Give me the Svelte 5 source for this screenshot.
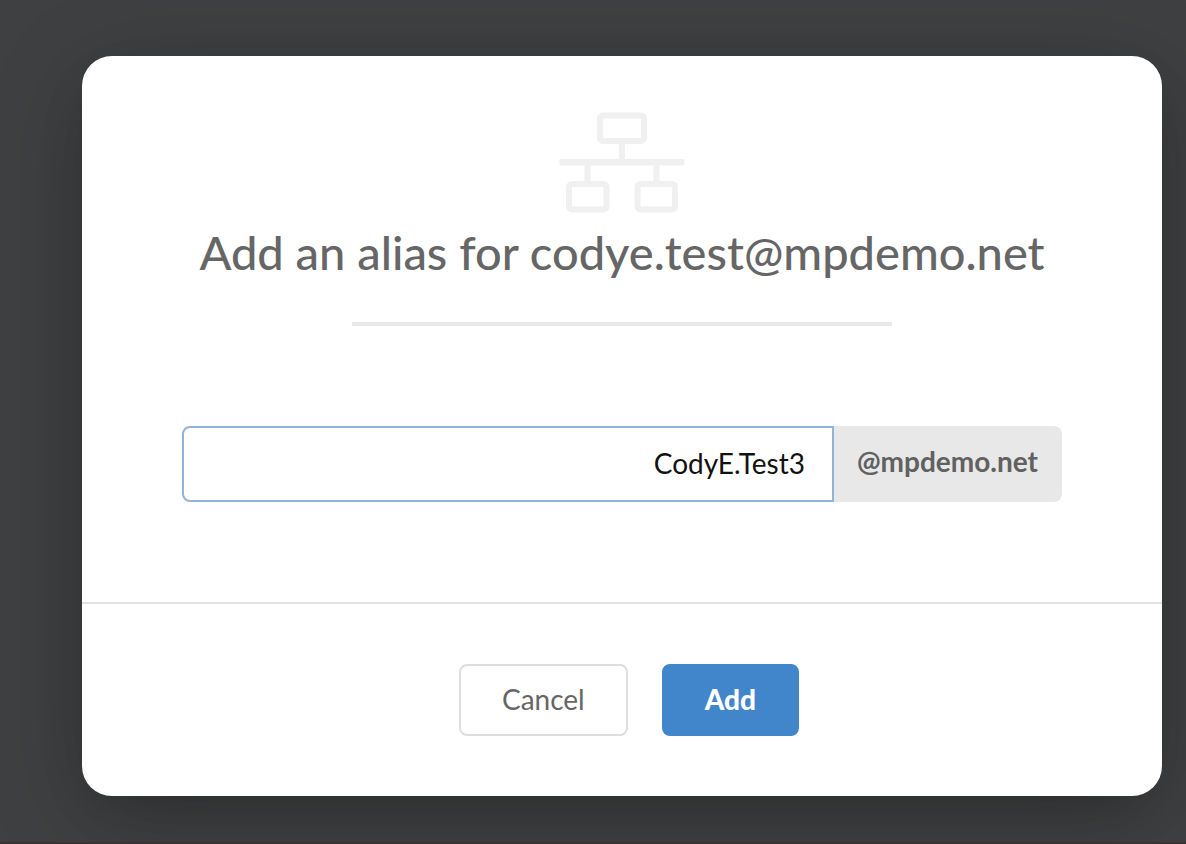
<script lang="ts">
  let address = 'codye.test@mpdemo.net';
  let domain = '@mpdemo.net';
  let alias = 'CodyE.Test3';
</script>

<div class="backdrop">
  <div class="modal" role="dialog" aria-labelledby="alias-title">
    <form on:submit|preventDefault>
      <div class="content">
        <svg class="icon" viewBox="0 0 126 102" fill="none" stroke="currentColor" stroke-width="6" aria-hidden="true">
          <rect x="41" y="3.5" width="44" height="25.5" rx="3" />
          <rect x="10" y="72" width="37.5" height="25.5" rx="3" />
          <rect x="78.5" y="72" width="37.5" height="25.5" rx="3" />
          <path d="M63 30V50M28.5 50V72M97.5 50V72" />
          <rect x="0.5" y="47" width="125" height="6.5" rx="1.5" fill="currentColor" stroke="none" />
        </svg>

        <h1 id="alias-title">Add an alias for {address}</h1>
        <hr />

        <div class="field">
          <input id="alias" type="text" aria-label="Alias" autocomplete="off" spellcheck="false" bind:value={alias} />
          <label for="alias">{domain}</label>
        </div>
      </div>

      <div class="actions">
        <button type="button" class="cancel">Cancel</button>
        <button type="submit" class="add">Add</button>
      </div>
    </form>
  </div>
</div>

<style>
  :global(body) {
    margin: 0;
    font-family: Lato, 'Open Sans', sans-serif;
    background-color: #3e3f40;
  }

  .backdrop {
    box-sizing: border-box;
    min-height: 100vh;
    padding: 56px 24px 46px 82px;
    border-bottom: 2px solid #3b3236;
    background-color: #3f4041;
    overflow: hidden;
  }

  .modal {
    border-radius: 30px;
    background-color: #ffffff;
    box-shadow: 0 20px 100px rgba(0, 0, 0, 0.2), 0 20px 60px -20px rgba(0, 0, 0, 0.2);
  }

  .content {
    display: flex;
    flex-direction: column;
    align-items: center;
    padding: 56px 100px 100px;
  }

  .icon {
    width: 126px;
    height: 102px;
    color: #f0f0f0;
  }

  h1 {
    margin: 8px 0 40px;
    color: #666666;
    font-size: 47px;
    font-weight: 500;
    line-height: 60px;
    text-align: center;
  }

  hr {
    width: 540px;
    max-width: 100%;
    height: 4px;
    margin: 0 0 100px;
    border: none;
    background-color: #e9e9e9;
  }

  .field {
    display: flex;
    width: 100%;
  }

  input {
    box-sizing: border-box;
    flex: 1;
    min-width: 0;
    height: 76px;
    padding: 0 27px 2px;
    border: 2px solid #8fb5d6;
    border-radius: 8px 0 0 8px;
    outline: none;
    background-color: #ffffff;
    color: #111111;
    font-family: inherit;
    font-size: 28px;
    text-align: right;
  }

  label {
    padding: 0 24px 0 23px;
    border-radius: 0 8px 8px 0;
    background-color: #e8e8e8;
    color: #616161;
    font-size: 28px;
    font-weight: bold;
    line-height: 70px;
  }

  .actions {
    display: flex;
    justify-content: center;
    gap: 34px;
    padding: 60px 24px 60px 38px;
    border-top: 2px solid #e2e2e2;
  }

  button {
    height: 72px;
    padding: 0 41px 2px;
    border: 2px solid transparent;
    border-radius: 8px;
    font-family: inherit;
    font-size: 28px;
    cursor: pointer;
  }

  .cancel {
    border-color: #dedede;
    background-color: #ffffff;
    color: #666666;
  }

  .add {
    border-color: #4186cb;
    background-color: #4186cb;
    color: #ffffff;
    font-weight: 900;
  }
</style>
